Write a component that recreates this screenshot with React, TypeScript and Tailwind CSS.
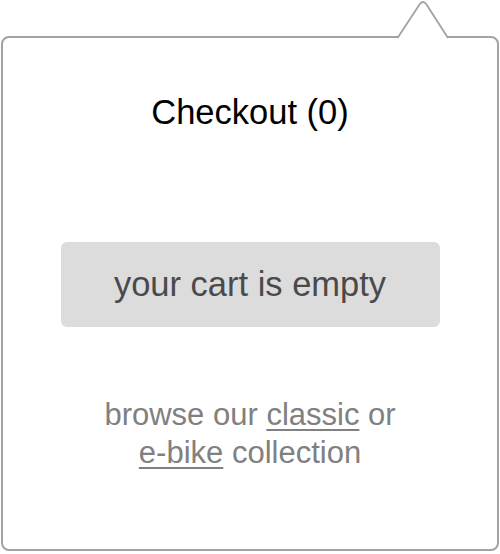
import React from 'react';

export default function App() {
  return (
    <div className="relative w-[500px] h-[554px] pt-[36px] bg-white font-['Liberation_Sans',Arial,sans-serif]">
      {/* popover body */}
      <div className="relative mx-[1px] h-[515px] rounded-[8px] border-2 border-[#a2a2a2] bg-white flex flex-col items-center">
        {/* arrow notch */}
        <svg
          className="absolute left-[388px] top-[-38px]"
          width="64"
          height="42"
          viewBox="0 0 64 42"
        >
          <path d="M6.5 38 L28.5 4.5 Q32 -0.5 35.5 4.5 L57 38 L57 41 L6.5 41 Z" fill="#ffffff" />
          <path
            d="M6.5 38 L28.5 4.5 Q32 -0.5 35.5 4.5 L57 38"
            fill="none"
            stroke="#a2a2a2"
            strokeWidth="1.8"
            strokeLinejoin="round"
          />
        </svg>

        <h2 className="mt-[54px] text-[34.5px] leading-[40px] text-black">Checkout (0)</h2>

        <div className="mt-[110px] w-[379px] h-[85px] rounded-[6px] bg-[#dcdcdc] flex items-center justify-center">
          <span className="text-[34.5px] text-[#4a4a4a]">your cart is empty</span>
        </div>

        <p className="mt-[69px] text-center text-[31px] leading-[38px] text-[#808080]">
          browse our <a className="underline underline-offset-[4px] decoration-[1.5px]">classic</a> or
          <br />
          <a className="underline underline-offset-[4px] decoration-[1.5px]">e-bike</a> collection
        </p>
      </div>
    </div>
  );
}
